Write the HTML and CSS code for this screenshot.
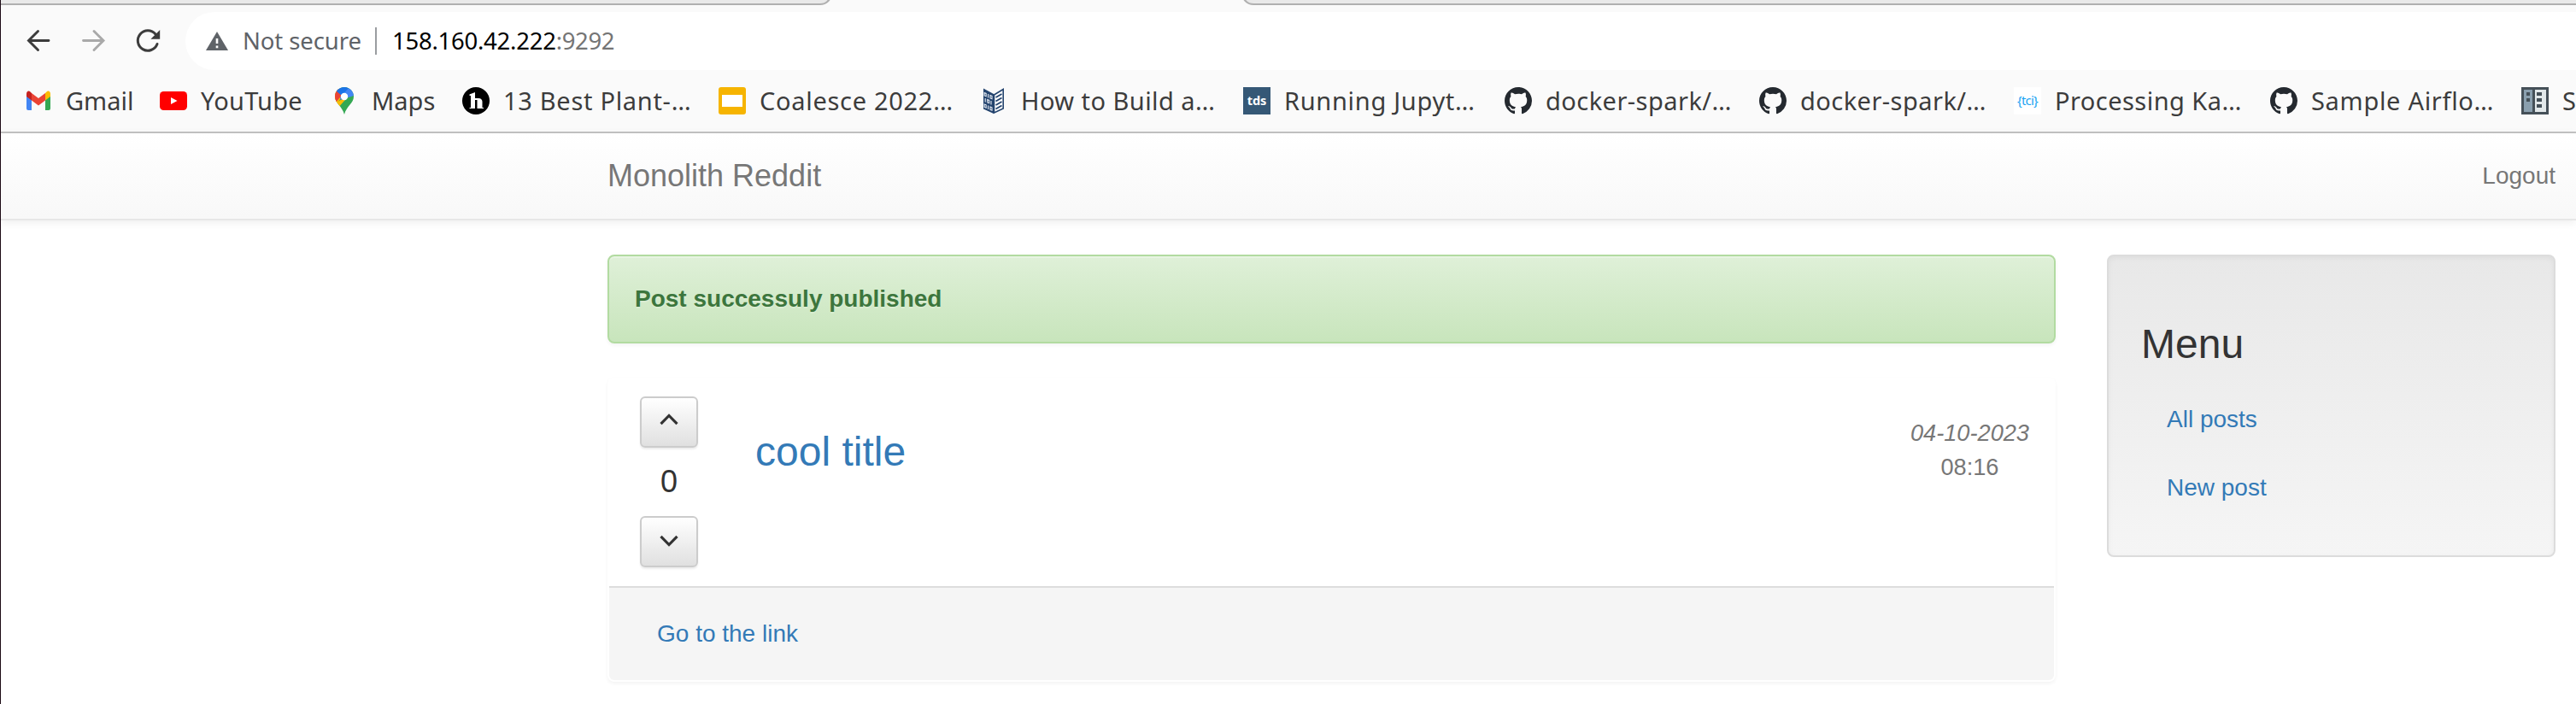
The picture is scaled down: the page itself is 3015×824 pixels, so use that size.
FILE: index.html
```
<!DOCTYPE html>
<html lang="en">
<head>
<meta charset="utf-8">
<title>Monolith Reddit</title>
<link rel="stylesheet" href="styles.css">
</head>
<body>
<svg class="defs" width="0" height="0">
  <symbol id="github" viewBox="0 0 16 16"><path fill="#24292f" d="M8 0C3.58 0 0 3.58 0 8c0 3.54 2.29 6.53 5.47 7.59.4.07.55-.17.55-.38 0-.19-.01-.82-.01-1.49-2.01.37-2.53-.49-2.69-.94-.09-.23-.48-.94-.82-1.13-.28-.15-.68-.52-.01-.53.63-.01 1.08.58 1.23.82.72 1.21 1.87.87 2.33.66.07-.52.28-.87.51-1.07-1.78-.2-3.64-.89-3.64-3.95 0-.87.31-1.59.82-2.15-.08-.2-.36-1.02.08-2.12 0 0 .67-.21 2.2.82.64-.18 1.32-.27 2-.27s1.36.09 2 .27c1.53-1.04 2.2-.82 2.2-.82.44 1.1.16 1.92.08 2.12.51.56.82 1.27.82 2.15 0 3.07-1.87 3.75-3.65 3.95.29.25.54.73.54 1.48 0 1.07-.01 1.93-.01 2.2 0 .21.15.46.55.38A8.01 8.01 0 0 0 16 8c0-4.42-3.58-8-8-8z"/></symbol>
</svg>
<div class="window">
  <div class="tabs"><div class="tab tab-left"></div><div class="tab tab-right"></div></div>
  <div class="toolbar">
    <svg class="nav-icon" viewBox="0 0 32 32" fill="none" stroke="#3c3c3c" stroke-width="2.900" stroke-linecap="round"><path d="M27 15.500H4M14.500 4.500 3.500 15.500l11 11"/></svg>
    <svg class="nav-icon" viewBox="0 0 32 32" fill="none" stroke="#a9a9a9" stroke-width="2.900" stroke-linecap="round"><path d="M3.500 15.500H26M16 4.500l11 11-11 11"/></svg>
    <svg class="nav-icon" viewBox="0 0 32 32" fill="none" stroke="#3c3c3c" stroke-width="3" stroke-linecap="round"><path d="M26 19.500A11.700 11.700 0 1 1 24 8"/><path fill="#3c3c3c" stroke="none" d="M29.200 3v10.800H18.400z"/></svg>
    <div class="address">
      <svg class="warn" viewBox="0 0 26 22"><path fill="#5f6368" d="M13 0 26 22H0z"/><path fill="#fff" d="M11.700 8h2.600v6h-2.600zM11.700 16.500h2.600v2.700h-2.600z"/></svg>
      <span class="secure">Not secure</span><span class="divider"></span><span class="host">158.160.42.222</span><span class="port">:9292</span>
    </div>
  </div>
  <div class="bookmarks">
    <div class="bm w158"><svg class="ico" viewBox="0 0 32 32"><path fill="#4285f4" d="M2 10v15a2 2 0 0 0 2 2H8V14z"/><path fill="#34a853" d="M24 14v13h4a2 2 0 0 0 2-2V10z"/><path fill="#ea4335" d="M8 7l8 6 8-6v8.500l-8 6-8-6z"/><path fill="#c5221f" d="M2 8c0-3 2.500-4.500 4.500-2.500L8 7v8.500L2 11z"/><path fill="#fbbc04" d="M30 8c0-3-2.500-4.500-4.500-2.500L24 7v8.500l6-4.500z"/></svg><span>Gmail</span></div>
    <div class="bm w200"><svg class="ico" viewBox="0 0 32 32"><rect y="5" width="32" height="22" rx="4.500" fill="#f00"/><path fill="#fff" d="M13 12v8l7.500-4z"/></svg><span class="ls-s">YouTube</span></div>
    <div class="bm w154"><svg class="ico" viewBox="0 0 32 32"><clipPath id="pin"><path d="M16 0C9.500 0 5 5 5 11c0 8 8.500 11 11 21 2.500-10 11-13 11-21C27 5 22.500 0 16 0z"/></clipPath><g clip-path="url(#pin)"><path fill="#34a853" d="M0 0h32v32H0z"/><path fill="#fbbc04" d="M4 22 22 2H0v24z M4 20l4 5 16-18z"/><path fill="#4285f4" d="M12 15 30 9 22 0 10 10z"/><path fill="#ea4335" d="M0 0h8l7 7-9 11z"/><path fill="#1a73e8" d="M6 4 13 10 22 0H8z"/></g><circle cx="16" cy="11" r="4.200" fill="#fff"/></svg><span>Maps</span></div>
    <div class="bm w300"><svg class="ico" viewBox="0 0 32 32"><circle cx="16" cy="16" r="16"/><path fill="#fff" d="M8.500 8.500 15 6v7h4c3 0 4.500 2 4.500 4v7H25v1H17.500V15H15v10H8.500v-1H10V10H8.500z"/></svg><span class="ls-l">13 Best Plant-…</span></div>
    <div class="bm w306"><svg class="ico" viewBox="0 0 32 32"><rect width="32" height="32" rx="3" fill="#f6b400"/><path fill="#fff" d="M4 9h24v14H4z"/></svg><span class="ls-l">Coalesce 2022…</span></div>
    <div class="bm w308"><svg class="ico" viewBox="0 0 32 32"><path fill="#24446e" d="M4 1.500 16 8v23L4 25.500z"/><path fill="#fff" stroke="#24446e" stroke-width="1.600" d="M27.200 2.500v22.500L16.500 30V9z"/><path stroke="#24446e" stroke-width="1.800" d="M18.500 12l7-4M18.500 16.500l7-4M18.500 21l7-4M18.500 25.500l7-4"/><g fill="none" stroke="#e3e9f1" stroke-width="1.100"><path d="M5.200 6.500l2 .8v3.400l-2-.8zM12 9.500l2 .8v3.400l-2-.8zM9.600 8v4.500M8.700 14.500l2 .8v3.400l-2-.8zM6.200 13v4.500M13 16v4.500M5.200 20l2 .8v3.400l-2-.8zM12 23l2 .8v3.400l-2-.8zM9.600 21.500V26"/></g></svg><span class="ls-m">How to Build a…</span></div>
    <div class="bm w306"><span class="ico tds">tds</span><span class="ls-l">Running Jupyt…</span></div>
    <div class="bm w298"><svg class="ico"><use href="#github"/></svg><span class="ls-m">docker-spark/…</span></div>
    <div class="bm w298"><svg class="ico"><use href="#github"/></svg><span class="ls-m">docker-spark/…</span></div>
    <div class="bm w300"><span class="ico tci">{tci}</span><span class="ls-m">Processing Ka…</span></div>
    <div class="bm w294"><svg class="ico"><use href="#github"/></svg><span class="ls-l">Sample Airflo…</span></div>
    <div class="bm"><svg class="ico" viewBox="0 0 32 32"><path fill="#455058" d="M0 0h32v32H0z"/><path fill="#8a9fae" d="M3 3h10v26H3z"/><path fill="#e2e8ea" d="M16 3h13v26H16z"/><path fill="#455058" d="M6 6h4v4H6zM6 13h4v4H6zM18 6h6v4h-6zM18 13h6v4h-6zM18 20h6v4h-6z"/></svg><span>S</span></div>
  </div>
  <div class="page">
    <nav class="navbar"><a class="brand">Monolith Reddit</a><a class="logout">Logout</a></nav>
    <main class="content">
      <section class="feed">
        <div class="alert">Post successuly published</div>
        <article class="panel">
          <div class="post">
            <div class="votes">
              <button class="vote vote-up"><svg viewBox="0 0 22 16"><path d="M1.500 13.200 11 3.500l9.500 9.700"/></svg></button>
              <span class="score">0</span>
              <button class="vote"><svg viewBox="0 0 22 16"><path d="M1.500 2.800 11 12.500l9.500-9.700"/></svg></button>
            </div>
            <h3 class="title">cool title</h3>
            <div class="date"><em>04-10-2023</em><span>08:16</span></div>
          </div>
          <div class="panel-footer">Go to the link</div>
        </article>
      </section>
      <aside class="menu"><h3>Menu</h3><a>All posts</a><a>New post</a></aside>
    </main>
  </div>
</div>
</body>
</html>
```
FILE: styles.css
```
* { box-sizing: border-box; }
body { margin: 0; background: #fff; font-family: "Liberation Sans", Arial, sans-serif; font-size: 28px; line-height: 40px; color: #333; }
.defs { display: block; }
.window { height: 824px; overflow: hidden; border-left: 1px solid #1d0b16; display: flex; flex-direction: column; }

/* browser chrome */
.tabs { height: 6px; background: #fafafa; display: flex; justify-content: space-between; flex: none; overflow: hidden; align-items: flex-end; }
.tab { height: 26px; background: #e9e9e9; border-bottom: 2px solid #b0b0b0; flex: none; }
.tab-left { width: 973px; border-right: 2px solid #b0b0b0; border-bottom-right-radius: 14px; }
.tab-right { width: 1562px; border-left: 2px solid #b0b0b0; border-bottom-left-radius: 14px; }
.toolbar { height: 76px; flex: none; background: #fafafa; padding: 8px 0 0 29px; display: flex; }
.nav-icon { width: 32px; height: 32px; margin: 18px 32px 0 0; flex: none; }
.address { flex: 1; height: 68px; margin-left: -5px; background: #fff; border-radius: 34px 0 0 34px; display: flex; align-items: center; padding-left: 24px; font-family: "Noto Sans", sans-serif; font-size: 27.500px; color: #5f6368; white-space: nowrap; }
.warn { width: 26px; height: 22px; margin-right: 17px; }
.secure { width: 155px; letter-spacing: -.1px; }
.divider { width: 2px; height: 32px; background: #9a9da0; margin-right: 18px; }
.host { color: #000; letter-spacing: -.25px; }
.port { color: #757575; letter-spacing: -.35px; }
.bookmarks { height: 74px; flex: none; background: #fafafa; border-bottom: 2px solid #c4c4c4; padding-left: 28px; display: flex; align-items: center; overflow: hidden; font-family: "Noto Sans", sans-serif; font-size: 29px; color: #3c3c3c; white-space: nowrap; }
.bm { display: flex; align-items: center; gap: 16px; flex: none; }
.ico { width: 32px; height: 32px; flex: none; }
.ls-s { letter-spacing: .25px; } .ls-m { letter-spacing: .45px; } .ls-l { letter-spacing: .7px; }
.tds { background: #355876; color: #fff; font-size: 14.500px; font-weight: 700; line-height: 31px; text-align: center; }
.tci { background: #fff; color: #1ba4f2; font-size: 15px; letter-spacing: -.8px; line-height: 30px; text-align: center; }
.w154 { width: 154px; } .w158 { width: 158px; } .w200 { width: 200px; } .w294 { width: 294px; } .w298 { width: 298px; }
.w300 { width: 300px; } .w306 { width: 306px; } .w308 { width: 308px; }

/* site */
.page { flex: 1; min-height: 0; }
.navbar { height: 102px; padding: 0 24px 0 710px; display: flex; align-items: center; justify-content: space-between; color: #777; background: linear-gradient(#fff, #f8f8f8); border-bottom: 2px solid #e7e7e7; box-shadow: 0 2px 10px rgba(0,0,0,.075); text-shadow: 0 2px 0 rgba(255,255,255,.25); }
.brand { font-size: 36px; }
.content { padding: 40px 24px 0 710px; display: grid; grid-template-columns: 1695px 525px; justify-content: space-between; align-items: start; }
.alert { height: 104px; padding: 30px; border: 2px solid #b2dba1; border-radius: 8px; background: linear-gradient(#dff0d8, #c8e5bc); color: #3c763d; font-weight: 700; text-shadow: 0 2px 0 rgba(255,255,255,.2); box-shadow: inset 0 2px 0 rgba(255,255,255,.25), 0 2px 4px rgba(0,0,0,.05); }
.panel { margin-top: 40px; height: 356px; border: 2px solid transparent; border-radius: 8px; box-shadow: 0 2px 4px rgba(0,0,0,.05); display: flex; flex-direction: column; }
.post { height: 242px; display: flex; padding: 20px 29px 0 36px; }
.votes { width: 68px; display: flex; flex-direction: column; align-items: center; }
.vote { width: 68px; height: 60px; padding: 4px 0 0; border: 2px solid #ccc; border-radius: 6px; background: linear-gradient(#fff, #e0e0e0); box-shadow: inset 0 2px 0 rgba(255,255,255,.15), 0 2px 2px rgba(0,0,0,.075); }
.vote svg { display: block; width: 22px; height: 16px; margin: 0 auto 6px; fill: none; stroke: #333; stroke-width: 3.200; }
.vote-up svg { margin-bottom: 10px; }
.score { height: 80px; font-size: 36px; line-height: 80px; }
.title { margin: 38px 0 0 67px; font-size: 48px; font-weight: 500; line-height: 53px; color: #337ab7; flex: 1; }
.date { padding-top: 23px; color: #777; font-size: 27.200px; text-align: center; }
.date em, .date span { display: block; }
.panel-footer { flex: 1; padding: 34px 56px; background: #f5f5f5; border-top: 2px solid #ddd; border-radius: 0 0 6px 6px; color: #337ab7; }
.menu { height: 354px; padding: 38px; border: 2px solid #dcdcdc; border-radius: 8px; background: linear-gradient(#e8e8e8, #f5f5f5); box-shadow: inset 0 2px 6px rgba(0,0,0,.05); }
.menu h3 { margin: 38px 0 22px; font-size: 48px; font-weight: 500; line-height: 53px; }
.menu a { display: block; padding: 20px 30px; color: #337ab7; }
```
